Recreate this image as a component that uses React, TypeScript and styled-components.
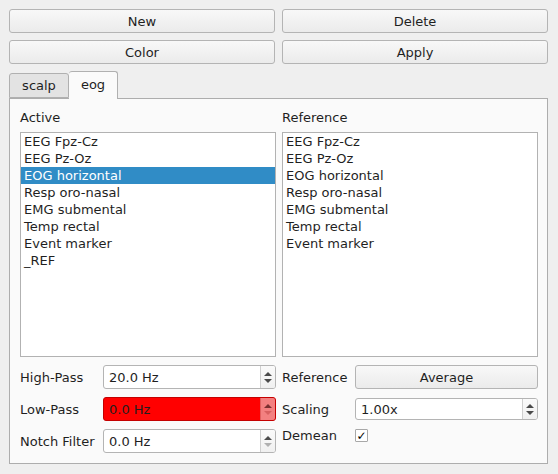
import React from "react";
import styled, { createGlobalStyle } from "styled-components";

const Global = createGlobalStyle`
  html, body { margin: 0; padding: 0; background: #efefef; }
  body { font-family: "DejaVu Sans", "Liberation Sans", sans-serif; font-size: 13px; color: #1f1f1f; }
  * { box-sizing: border-box; }
`;

const Window = styled.div`
  width: 558px;
  height: 474px;
  padding: 9px 10px 0 9px;
  background: #efefef;
`;

const ButtonGrid = styled.div`
  display: grid;
  grid-template-columns: 1fr 1fr;
  column-gap: 7px;
  row-gap: 7px;
`;

const PushButton = styled.button`
  height: 24px;
  border: 1px solid #b4b4b4;
  border-radius: 3px;
  background: linear-gradient(#f8f8f8, #ebebeb);
  font-family: inherit;
  font-size: 13px;
  color: #1f1f1f;
  padding: 0;
  display: flex;
  align-items: center;
  justify-content: center;
`;

const TabBar = styled.div`
  margin-top: 7px;
  height: 27px;
  display: flex;
  align-items: flex-end;
  position: relative;
  z-index: 1;
`;

const Tab = styled.div<{ $active?: boolean; $w: number }>`
  width: ${(p) => p.$w}px;
  height: ${(p) => (p.$active ? 28 : 25)}px;
  margin-bottom: ${(p) => (p.$active ? -1 : 0)}px;
  border: 1px solid #b0b0b0;
  border-bottom: ${(p) => (p.$active ? "none" : "1px solid #b0b0b0")};
  border-left: ${(p) => (p.$active ? "none" : "1px solid #b0b0b0")};
  border-radius: 3px 3px 0 0;
  background: ${(p) => (p.$active ? "#fafafa" : "#e3e3e3")};
  display: flex;
  align-items: center;
  justify-content: center;
  padding-bottom: ${(p) => (p.$active ? 2 : 0)}px;
`;

const Pane = styled.div`
  height: 366px;
  border: 1px solid #adadad;
  background: #fafafa;
  padding: 10px 9px 10px 10px;
  display: grid;
  grid-template-columns: 1fr 1fr;
  grid-template-rows: 17px 225px 1fr;
  column-gap: 6px;
  row-gap: 6px;
`;

const Label = styled.div`
  line-height: 17px;
  white-space: nowrap;
`;

const List = styled.div`
  border: 1px solid #b2b2b2;
  background: #fff;
  padding: 0;
`;

const Item = styled.div<{ $sel?: boolean }>`
  height: 17px;
  line-height: 17px;
  padding-left: 3px;
  background: ${(p) => (p.$sel ? "#308cc6" : "transparent")};
  color: ${(p) => (p.$sel ? "#fff" : "#1f1f1f")};
  white-space: nowrap;
`;

const Form = styled.div<{ $label: number; $rows: string }>`
  margin-top: 2px;
  display: grid;
  grid-template-columns: ${(p) => p.$label}px 1fr;
  grid-template-rows: ${(p) => p.$rows};
  row-gap: 8px;
  align-items: center;
  align-content: start;
`;

const Spin = styled.div<{ $bad?: boolean; $h?: number }>`
  height: ${(p) => p.$h ?? 24}px;
  border: 1px solid ${(p) => (p.$bad ? "#c40000" : "#b4b4b4")};
  border-radius: 3px;
  background: ${(p) => (p.$bad ? "#ff0000" : "#fff")};
  display: flex;
  overflow: hidden;
`;

const SpinText = styled.div`
  flex: 1;
  display: flex;
  align-items: center;
  padding-left: 5px;
`;

const SpinButtons = styled.div<{ $bad?: boolean }>`
  width: 15px;
  border-left: 1px solid ${(p) => (p.$bad ? "#e06060" : "#cfcfcf")};
  background: ${(p) => (p.$bad ? "#f38080" : "linear-gradient(#fafafa, #f0f0f0)")};
  display: flex;
  flex-direction: column;
  align-items: center;
  justify-content: center;
  gap: 3px;
`;

const Arrow = styled.div<{ $down?: boolean; $dim?: boolean; $bad?: boolean }>`
  width: 0;
  height: 0;
  border-left: 4px solid transparent;
  border-right: 4px solid transparent;
  ${(p) =>
    p.$down
      ? `border-top: 4px solid ${p.$bad ? (p.$dim ? "#d86060" : "#7a3030") : p.$dim ? "#b0b0b0" : "#4a4a4a"};`
      : `border-bottom: 4px solid ${p.$bad ? "#7a3030" : p.$dim ? "#b0b0b0" : "#4a4a4a"};`}
`;

const Check = styled.div`
  width: 13px;
  height: 13px;
  border: 1px solid #a8a8a8;
  background: #fff;
  display: flex;
  align-items: center;
  justify-content: center;
  font-size: 12px;
  font-weight: bold;
  line-height: 1;
  color: #000;
  border-radius: 1px;
`;

const Cell = styled.div`
  display: flex;
  align-items: center;
`;

const SpinBox = ({ value, bad, dimDown, h }: { value: string; bad?: boolean; dimDown?: boolean; h?: number }) => (
  <Spin $bad={bad} $h={h}>
    <SpinText>{value}</SpinText>
    <SpinButtons $bad={bad}>
      <Arrow $bad={bad} />
      <Arrow $down $dim={dimDown} $bad={bad} />
    </SpinButtons>
  </Spin>
);

const channels = [
  "EEG Fpz-Cz",
  "EEG Pz-Oz",
  "EOG horizontal",
  "Resp oro-nasal",
  "EMG submental",
  "Temp rectal",
  "Event marker",
];

export default function App() {
  return (
    <Window>
      <Global />
      <ButtonGrid>
        <PushButton>New</PushButton>
        <PushButton>Delete</PushButton>
        <PushButton>Color</PushButton>
        <PushButton>Apply</PushButton>
      </ButtonGrid>
      <TabBar>
        <Tab $w={60}>scalp</Tab>
        <Tab $w={49} $active>
          eog
        </Tab>
      </TabBar>
      <Pane>
        <Label>Active</Label>
        <Label>Reference</Label>
        <List>
          {[...channels, "_REF"].map((c) => (
            <Item key={c} $sel={c === "EOG horizontal"}>
              {c}
            </Item>
          ))}
        </List>
        <List>
          {channels.map((c) => (
            <Item key={c}>{c}</Item>
          ))}
        </List>
        <Form $label={83} $rows="24px 24px 24px">
          <Label>High-Pass</Label>
          <SpinBox value="20.0 Hz" />
          <Label>Low-Pass</Label>
          <SpinBox value="0.0 Hz" bad dimDown />
          <Label>Notch Filter</Label>
          <SpinBox value="0.0 Hz" dimDown />
        </Form>
        <Form $label={73} $rows="24px 24px 13px">
          <Label>Reference</Label>
          <PushButton>Average</PushButton>
          <Label>Scaling</Label>
          <SpinBox value="1.00x" h={22} />
          <Label>Demean</Label>
          <Cell>
            <Check>✓</Check>
          </Cell>
        </Form>
      </Pane>
    </Window>
  );
}
